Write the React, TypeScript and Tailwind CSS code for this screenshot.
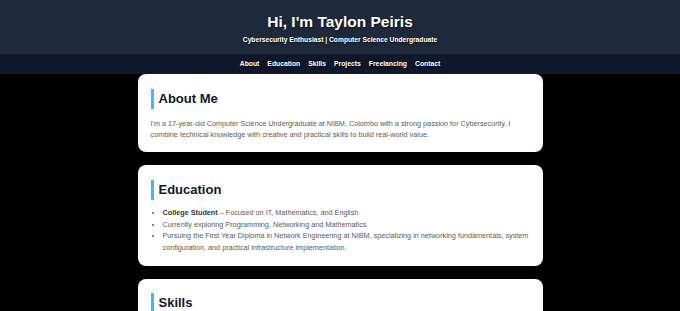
import React from "react";

const navItems = ["About", "Education", "Skills", "Projects", "Freelancing", "Contact"];

function Heading({ children }: { children: React.ReactNode }) {
  return (
    <h2 className="border-l-[3px] border-[#38bdf8] pl-[5px] text-[13px] leading-[20px] font-bold text-[#111827] [font-family:'Liberation_Sans',Arial,sans-serif]">
      {children}
    </h2>
  );
}

export default function App() {
  return (
    <div className="min-h-screen bg-black antialiased [font-family:'Liberation_Sans',Arial,sans-serif]">
      <header className="h-[54px] bg-[#1e293b] flex flex-col items-center pt-[13px] text-white [text-shadow:1px_1px_2px_rgba(0,0,0,0.6)]">
        <h1 className="text-[15.5px] leading-[18px] font-bold">Hi, I'm Taylon Peiris</h1>
        <p className="text-[6.7px] leading-[9px] font-bold mt-[4px]">
          Cybersecurity Enthusiast | Computer Science Undergraduate
        </p>
      </header>
      <nav className="h-[20px] bg-[#0f172a] flex items-center justify-center gap-[8px] text-white text-[6.8px] font-bold [text-shadow:1px_1px_2px_rgba(0,0,0,0.6)]">
        {navItems.map((n) => (
          <a key={n}>{n}</a>
        ))}
      </nav>
      <main className="flex flex-col items-center gap-[13px]">
        <section className="w-[405px] bg-white rounded-[8px] px-[13px] pt-[15px] pb-[12px]">
          <Heading>About Me</Heading>
          <p className="mt-[9px] text-[7.25px] leading-[11px] text-[#5b5b5b]">
            I'm a 17-year-old Computer Science Undergraduate at NIBM, Colombo with a strong passion for Cybersecurity. I
            combine technical knowledge with creative and practical skills to build real-world value.
          </p>
        </section>
        <section className="w-[405px] bg-white rounded-[8px] px-[13px] pt-[15px] pb-[13px]">
          <Heading>Education</Heading>
          <ul className="mt-[7px] list-disc pl-[12px] text-[7.25px] leading-[11.5px] text-[#5b5b5b]">
            <li>
              <strong className="text-[#333]">College Student</strong> – Focused on IT, Mathematics, and English
            </li>
            <li>Currently exploring Programming, Networking and Mathematics</li>
            <li>
              Pursuing the First Year Diploma in Network Engineering at NIBM, specializing in networking fundamentals, system
              configuration, and practical infrastructure implementation.
            </li>
          </ul>
        </section>
        <section className="w-[405px] bg-white rounded-[8px] px-[13px] pt-[14px] pb-[14px]">
          <Heading>Skills</Heading>
          <p className="mt-[9px] text-[7.25px] leading-[11px] text-[#5b5b5b]">&nbsp;</p>
        </section>
      </main>
    </div>
  );
}
